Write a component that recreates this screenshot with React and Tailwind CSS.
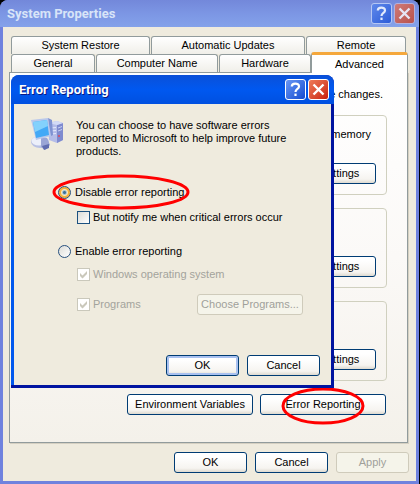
import clsx from 'clsx'
import { useState } from 'react'

const backTabs = [
  { name: 'System Restore', width: 'w-[139px]' },
  { name: 'Automatic Updates', width: 'w-[154px]' },
  { name: 'Remote', width: 'w-[100px]' },
]

const frontTabs = [
  { name: 'General', width: 'w-[84px]' },
  { name: 'Computer Name', width: 'w-[122px]' },
  { name: 'Hardware', width: 'w-[92px]' },
]

const groups = [
  { id: 'performance', text: 'memory' },
  { id: 'profiles', text: '' },
  { id: 'startup', text: '' },
]

function Button({ className, primary, disabled, children, ...props }) {
  return (
    <button
      disabled={disabled}
      className={clsx(
        'relative h-[21px] rounded-[3px] border whitespace-nowrap text-center',
        disabled
          ? 'border-[#cfcbbb] bg-[#f5f4ea] text-[#a0a09a]'
          : 'border-[#003c74] bg-linear-to-b from-white from-20% via-[#f6f4f0] via-80% to-[#dedad0] text-black',
        primary && 'shadow-[inset_0_0_0_2px_#a9c1f0]',
        className
      )}
      {...props}
    >
      {children}
    </button>
  )
}

function CaptionButtons({ active }) {
  return (
    <div className="flex gap-[2px]">
      <button
        aria-label="Help"
        className={clsx(
          'grid size-[21px] place-items-center rounded-[3px] border bg-linear-to-br',
          active ? 'border-white from-[#6a97f4] to-[#1248d0]' : 'border-[#b4c6f4] from-[#5f88ea] to-[#2c5bd8]'
        )}
      >
        <svg viewBox="0 0 19 19" className="size-[19px]" fill="none" stroke={active ? '#fff' : '#e2eafc'} strokeWidth="2.2">
          <path d="M5.8 6.6C5.8 2.6 13 2.6 13 6.4C13 9 9.5 8.8 9.5 12" />
          <path d="M9.5 13.6V16" />
        </svg>
      </button>
      <button
        aria-label="Close"
        className={clsx(
          'grid size-[21px] place-items-center rounded-[3px] border bg-linear-to-br',
          active ? 'border-white from-[#ee7a58] to-[#c81808]' : 'border-[#b4b0dc] from-[#cf7a78] to-[#b8514c]'
        )}
      >
        <svg viewBox="0 0 19 19" className="size-[19px]" fill="none" stroke={active ? '#fff' : '#e6e4f4'} strokeWidth="2.4">
          <path d="M4.5 4.5L14.5 14.5M14.5 4.5L4.5 14.5" />
        </svg>
      </button>
    </div>
  )
}

function Tab({ tab }) {
  return (
    <button
      role="tab"
      aria-selected="false"
      className={clsx(
        'h-[18px] shrink-0 rounded-t-[3px] border border-b-0 border-[#919b9c] bg-linear-to-b from-white to-[#f0efe9] whitespace-nowrap',
        tab.width
      )}
    >
      {tab.name}
    </button>
  )
}

function Check({ label, ...props }) {
  return (
    <label className={clsx('flex h-[13px] items-center gap-[3px]', props.disabled && 'text-[#a3a39c]')}>
      <span className="relative size-[13px]">
        <input
          type="checkbox"
          className="peer block size-[13px] appearance-none border border-[#1c5180] bg-linear-to-br from-[#dcdcd7] to-white disabled:border-[#cac8bb] disabled:bg-none disabled:bg-white"
          {...props}
        />
        <svg viewBox="0 0 13 13" className="pointer-events-none absolute inset-0 hidden size-[13px] peer-checked:block">
          <path d="M3 5V8L5.5 10.5L10 6V3L5.5 7.5Z" fill={props.disabled ? '#cac8bb' : '#21a121'} />
        </svg>
      </span>
      {label}
    </label>
  )
}

function Radio({ label, ...props }) {
  return (
    <label className="flex h-[13px] items-center gap-1">
      <input
        type="radio"
        name="reporting"
        className="size-[13px] appearance-none rounded-full border border-[#27507f] bg-linear-to-br from-[#dcdcd7] to-white checked:bg-[radial-gradient(circle,#3f7296_0_1px,#a9c4d4_2px,#fbe9b8_3px,#f3b13c_4px,#f0b850_6px)]"
        {...props}
      />
      {label}
    </label>
  )
}

function Marker({ className, viewBox, ...ellipse }) {
  return (
    <svg viewBox={viewBox} className={clsx('pointer-events-none absolute', className)}>
      <ellipse fill="none" stroke="#f00" strokeWidth="3" {...ellipse} />
    </svg>
  )
}

function ComputerIcon() {
  return (
    <svg viewBox="0 0 32 32" className="size-8 shrink-0" aria-hidden="true">
      <path d="M17 5L26 3L32 5V22L26 25L18 22Z" fill="#b4bce8" />
      <path d="M26 7L32 5V22L26 25Z" fill="#7f8bcf" />
      <path d="M17 5L26 3L32 5L26 7Z" fill="#d3daf6" />
      <path d="M20 10L25 9.500M20 13L25 12.500M20 16L25 15.500" stroke="#e4e9fc" />
      <path d="M27 10L31 8.500M27 13L31 11.500" stroke="#c9d2f5" />
      <path d="M27 17H29V19H27Z" fill="#c95a78" />
      <ellipse cx="9" cy="24" rx="9" ry="6" fill="#b9c1e4" />
      <ellipse cx="8" cy="23" rx="7.500" ry="4.500" fill="#eceffa" />
      <path d="M10 20H16L19 27L14 32L10 29Z" fill="#9aa5d6" />
      <path d="M11 28L18 26V30L13 32Z" fill="#606db0" />
      <path d="M0 2L17 0L20 18L5 22Z" fill="#b9c8ec" />
      <path d="M17 0L21 2L22 17L20 18Z" fill="#7f92d2" />
      <path d="M2 4L16 2L18 17L5 20Z" fill="#43a9f6" />
      <path d="M2 4L16 2L17 8L4 14Z" fill="#83d1fc" />
    </svg>
  )
}

function ErrorReportingDialog() {
  const [mode, setMode] = useState('disable')
  const [notify, setNotify] = useState(false)

  return (
    <section
      role="dialog"
      aria-label="Error Reporting"
      className="absolute top-[75px] left-[11px] w-[323px] rounded-t-lg bg-linear-to-r from-[#0058ee] from-50% to-[#0014a0] to-50% px-[3px] pb-[3px] shadow-[inset_0_-3px_#0014a0]"
    >
      <header className="-mx-[3px] flex h-[29px] items-center justify-between rounded-t-lg bg-linear-to-b from-[#0a50d8] via-[#0058f0] to-[#0050e0] pr-[5px] pl-2">
        <h2 className="font-[Roboto,sans-serif] text-[13px] font-bold text-white [text-shadow:1px_1px_#0a1883]">
          Error Reporting
        </h2>
        <CaptionButtons active />
      </header>

      <div className="bg-[#efebde] pt-[14px] pr-[11px] pb-[9px] pl-[17px]">
        <div className="flex gap-[13px]">
          <ComputerIcon />
          <p className="w-[224px] pt-px leading-[13px]">
            You can choose to have software errors reported to Microsoft to help improve future products.
          </p>
        </div>

        <div className="pt-[28px] pl-[27px]">
          <div className="relative">
            <Radio label="Disable error reporting" checked={mode === 'disable'} onChange={() => setMode('disable')} />
            <Marker className="-top-3 -left-[6px] h-[36px] w-[138px]" viewBox="0 0 138 36" cx="69" cy="18" rx="67" ry="16" />
          </div>
          <div className="pt-3 pl-[19px]">
            <Check
              label="But notify me when critical errors occur"
              checked={notify}
              onChange={(e) => setNotify(e.target.checked)}
            />
          </div>
          <div className="pt-[21px]">
            <Radio label="Enable error reporting" checked={mode === 'enable'} onChange={() => setMode('enable')} />
          </div>
          <div className="pt-[10px] pl-[19px]">
            <Check label="Windows operating system" defaultChecked disabled />
          </div>
          <div className="flex items-center justify-between pt-[13px] pr-[17px] pl-[19px]">
            <Check label="Programs" defaultChecked disabled />
            <Button disabled className="w-[106px]">Choose Programs...</Button>
          </div>
        </div>

        <div className="flex justify-end gap-2 pt-[40px]">
          <Button primary className="w-[73px]">OK</Button>
          <Button className="w-[73px]">Cancel</Button>
        </div>
      </div>
    </section>
  )
}

export default function App() {
  return (
    <div className="min-h-screen bg-black pr-px font-['Liberation_Sans',Arial,sans-serif] text-[11px] leading-[13px] text-black">
      <main className="relative min-h-screen rounded-t-lg bg-[#6f82de] px-[3px] pb-[3px]">
        <header className="-mx-[3px] flex h-[27px] items-center justify-between rounded-t-lg bg-linear-to-b from-[#7388da] via-[#7c96e4] to-[#84a2ea] pr-1 pl-[7px]">
          <h1 className="font-[Roboto,sans-serif] text-[13px] font-bold text-[#d8e4f8]">System Properties</h1>
          <CaptionButtons />
        </header>

        <div className="bg-[#efebde] pt-[9px] pr-[7px] pb-2 pl-[6px]">
          <div role="tablist" className="px-[2px]">
            <div className="flex gap-px">
              {backTabs.map((tab) => (
                <Tab key={tab.name} tab={tab} />
              ))}
            </div>
            <div className="flex items-end gap-px">
              {frontTabs.map((tab) => (
                <Tab key={tab.name} tab={tab} />
              ))}
              <button
                role="tab"
                aria-selected="true"
                className="z-10 -mt-[2px] -mr-px -mb-px -ml-px h-[21px] flex-1 rounded-t-[3px] border border-t-[3px] border-b-0 border-[#919b9c] border-t-[#f5a83c] bg-white"
              >
                Advanced
              </button>
            </div>
          </div>

          <div className="mr-px border border-[#919b9c] bg-linear-to-b from-white via-[#fbf9f7] to-[#f4f1ea] px-[10px] pb-[27px] shadow-[1px_1px_#d5d0c2]">
            <p className="flex justify-end pt-[15px] pr-[14px]">e changes.</p>
            <div className="flex flex-col gap-[13px] pt-[14px] pr-[10px]">
              {groups.map((group) => (
                <section
                  key={group.id}
                  className="flex h-[80px] flex-col items-end justify-between rounded-[4px] border border-[#d0d0bf] pt-3 pr-[10px] pb-[10px]"
                >
                  <p className="pr-[5px]">{group.text}</p>
                  <Button className="w-[73px]">Settings</Button>
                </section>
              ))}
            </div>
            <div className="flex justify-end gap-[7px] pt-[13px] pr-[11px]">
              <Button className="w-[126px]">Environment Variables</Button>
              <Button className="w-[126px]">
                Error Reporting
                <Marker className="-top-2 left-5 h-[38px] w-[84px]" viewBox="0 0 84 38" cx="42" cy="19" rx="40" ry="17" />
              </Button>
            </div>
          </div>

          <div className="flex justify-end gap-2 pt-[9px]">
            <Button className="w-[73px]">OK</Button>
            <Button className="w-[73px]">Cancel</Button>
            <Button disabled className="w-[73px]">Apply</Button>
          </div>
        </div>

        <ErrorReportingDialog />
      </main>
    </div>
  )
}
